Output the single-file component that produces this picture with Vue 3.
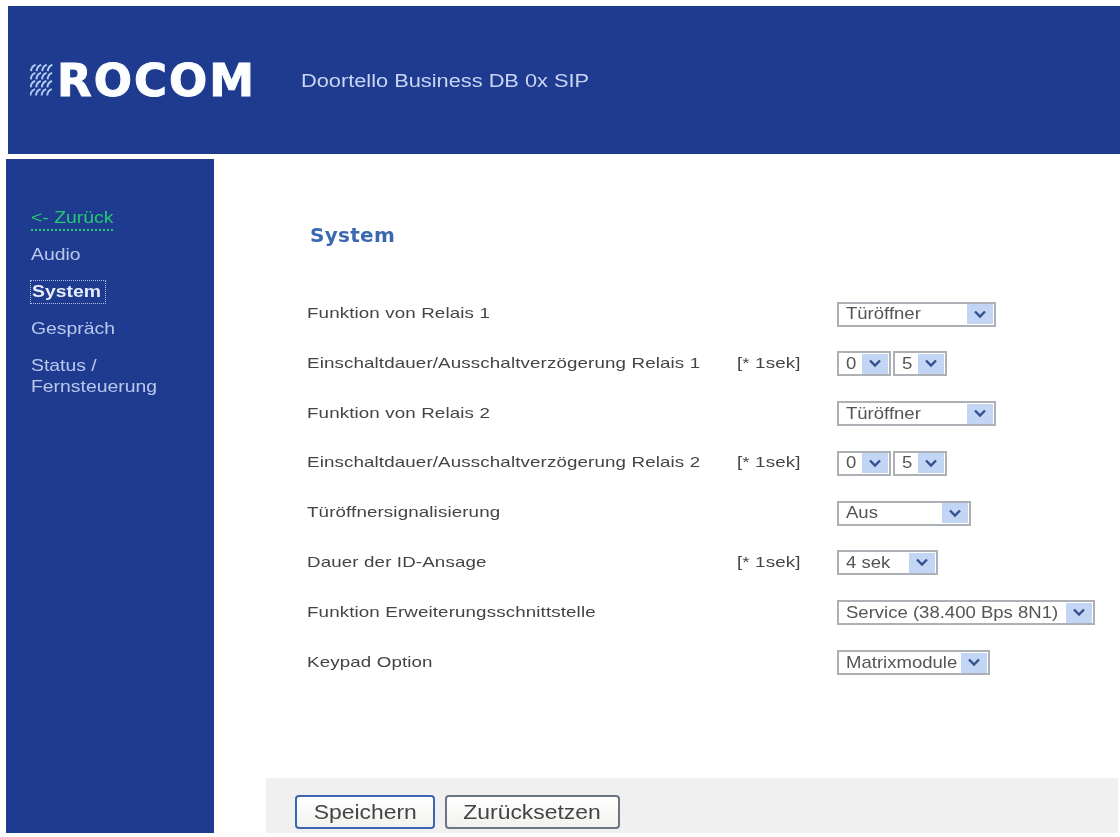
<script setup>
const menu = [
  { label: 'Audio' },
  { label: 'System', current: true },
  { label: 'Gespräch' },
  { label: 'Status /\nFernsteuerung' },
]
const rows = [
  { label: 'Funktion von Relais 1', selects: [{ text: 'Türöffner', width: 159 }] },
  { label: 'Einschaltdauer/Ausschaltverzögerung Relais 1', unit: '[* 1sek]', selects: [{ text: '0', width: 54 }, { text: '5', width: 54 }] },
  { label: 'Funktion von Relais 2', selects: [{ text: 'Türöffner', width: 159 }] },
  { label: 'Einschaltdauer/Ausschaltverzögerung Relais 2', unit: '[* 1sek]', selects: [{ text: '0', width: 54 }, { text: '5', width: 54 }] },
  { label: 'Türöffnersignalisierung', selects: [{ text: 'Aus', width: 134 }] },
  { label: 'Dauer der ID-Ansage', unit: '[* 1sek]', selects: [{ text: '4 sek', width: 101 }] },
  { label: 'Funktion Erweiterungsschnittstelle', selects: [{ text: 'Service (38.400 Bps 8N1)', width: 258 }] },
  { label: 'Keypad Option', selects: [{ text: 'Matrixmodule', width: 153 }] },
]
const marks = []
for (let r = 0; r < 4; r++) for (let c = 0; c < 4; c++) marks.push({ x: 1 + c * 5.6 - r * 0.2, y: 0.8 + r * 8.1 })
</script>

<template>
  <div class="page">
    <header class="header">
      <div class="logo">
        <svg class="logo-mark" width="24" height="33" viewBox="0 0 24 33">
          <path v-for="(m, i) in marks" :key="i" :d="`M${m.x} ${m.y + 6.4} Q${m.x + 0.4} ${m.y + 1.4} ${m.x + 4.6} ${m.y}`" />
        </svg>
        <span class="logo-text">ROCOM</span>
      </div>
      <div class="product"><span class="wide">Doortello Business DB 0x SIP</span></div>
    </header>
    <div class="body">
      <nav class="sidebar">
        <a class="back"><span class="wide">&lt;- Zurück</span></a>
        <a v-for="m in menu" :key="m.label" class="item" :class="{ current: m.current }"><span class="wide">{{ m.label }}</span></a>
      </nav>
      <main class="main">
        <h1 class="title">System</h1>
        <div class="form">
          <div v-for="(r, i) in rows" :key="i" class="row">
            <span class="label"><span class="wide">{{ r.label }}</span></span>
            <span class="unit"><span class="wide">{{ r.unit }}</span></span>
            <span class="controls">
              <span v-for="(s, j) in r.selects" :key="j" class="select" :style="{ width: s.width + 'px' }">
                <span class="value"><span class="wide">{{ s.text }}</span></span>
                <span class="arrow">
                  <svg width="14" height="9" viewBox="0 0 14 9"><path d="M2 1.5 L7 6.5 L12 1.5" /></svg>
                </span>
              </span>
            </span>
          </div>
        </div>
        <div class="toolbar">
          <button class="btn primary"><span class="wide center">Speichern</span></button>
          <button class="btn"><span class="wide center">Zurücksetzen</span></button>
        </div>
      </main>
    </div>
  </div>
</template>

<style>
html, body { margin: 0; background: #fff; }
</style>

<style scoped>
.page {
  width: 1120px;
  height: 837px;
  box-sizing: border-box;
  padding-top: 6px;
  overflow: hidden;
  background: #fff;
  font-family: "Liberation Sans", Arial, sans-serif;
  filter: blur(0.5px);
}
.wide {
  display: inline-block;
  white-space: pre-line;
  transform: scaleX(var(--wide, 1.1));
  transform-origin: left center;
}
.wide.center { transform-origin: center; }
.header {
  margin-left: 8px;
  height: 148px;
  background: #1f3b90;
  display: flex;
  align-items: center;
  color: #fff;
}
.logo {
  display: flex;
  align-items: center;
  gap: 3px;
  margin-left: 22px;
  width: 271px;
  margin-top: 1px;
}
.logo-mark { fill: none; stroke: #b4ccf3; stroke-width: 1.9; }
.logo-text {
  font-family: "DejaVu Sans", sans-serif;
  font-weight: 700;
  font-size: 45px;
  line-height: 40px;
  letter-spacing: 2px;
  color: #fbfdff;
  -webkit-text-stroke: 1px #fbfdff;
}
.product { --wide: 1.21; font-size: 18px; color: #c8d5f3; margin-top: 3px; white-space: nowrap; }
.body { display: flex; margin-top: 5px; height: 674px; }
.sidebar {
  --wide: 1.14;
  width: 208px;
  margin-left: 6px;
  box-sizing: border-box;
  padding: 48px 0 0 25px;
  background: #1f3b90;
  display: flex;
  flex-direction: column;
  align-items: flex-start;
  font-size: 17px;
  line-height: 21px;
  color: #b9c9ee;
}
.back {
  width: 82px;
  color: #22c96e;
  border-bottom: 2px dotted #22c96e;
  margin-bottom: 13px;
  height: 24px;
  box-sizing: border-box;
  line-height: 21px;
  white-space: nowrap;
}
.item { margin-bottom: 16px; }
.item:first-of-type { color: #d6dff4; }
.current {
  --wide: 1.14;
  width: 74px;
  font-weight: 700;
  color: #e6ecfa;
  outline: 1px dotted #aebee6;
  margin-bottom: 15px;
  padding-left: 1px;
  box-sizing: border-box;
  line-height: 22px;
}
.main {
  flex: 1;
  min-width: 0;
  display: flex;
  flex-direction: column;
}
.title {
  margin: 64px 0 0 96px;
  font-family: "DejaVu Sans", sans-serif;
  font-size: 20px;
  line-height: 24px;
  letter-spacing: 0.3px;
  font-weight: 700;
  color: #3a69b0;
}
.form {
  margin: 54px 0 0 93px;
  display: flex;
  flex-direction: column;
  gap: 23.8px;
}
.row {
  display: grid;
  grid-template-columns: 430px 100px 1fr;
  align-items: center;
  height: 26px;
  font-size: 15px;
  letter-spacing: 0.1px;
  color: #444;
}
.label { --wide: 1.25; margin-top: -3px; white-space: nowrap; }
.unit { --wide: 1.25; margin-top: -3px; white-space: nowrap; }
.controls { display: flex; gap: 2px; letter-spacing: 0; }
.select {
  height: 25px;
  box-sizing: border-box;
  border: 2px solid #adb1b5;
  background: #fff;
  display: flex;
  align-items: center;
  justify-content: space-between;
  padding: 0 1px;
}
.value { --wide: 1.09; padding-left: 6px; font-size: 17px; color: #555; white-space: nowrap; }
.arrow {
  width: 26px;
  height: 20px;
  flex: none;
  background: #c3d5f4;
  display: flex;
  align-items: center;
  justify-content: center;
}
.arrow svg { fill: none; stroke: #33508f; stroke-width: 2.4; }
.toolbar {
  margin: auto 2px 0 52px;
  height: 55px;
  background: #f0f0f0;
  display: flex;
  align-items: flex-start;
  gap: 10px;
  padding: 17px 0 0 29px;
  box-sizing: border-box;
}
.btn {
  --wide: 1.09;
  height: 34px;
  padding: 0;
  border: 2px solid #6b7480;
  border-radius: 4px;
  background: linear-gradient(#fff, #f1f1ee);
  font-family: "Liberation Sans", Arial, sans-serif;
  font-size: 21px;
  color: #444;
  width: 139px;
}
.btn:last-child { width: 175px; }
.primary { border-color: #3c66b4; width: 140px; }
</style>
